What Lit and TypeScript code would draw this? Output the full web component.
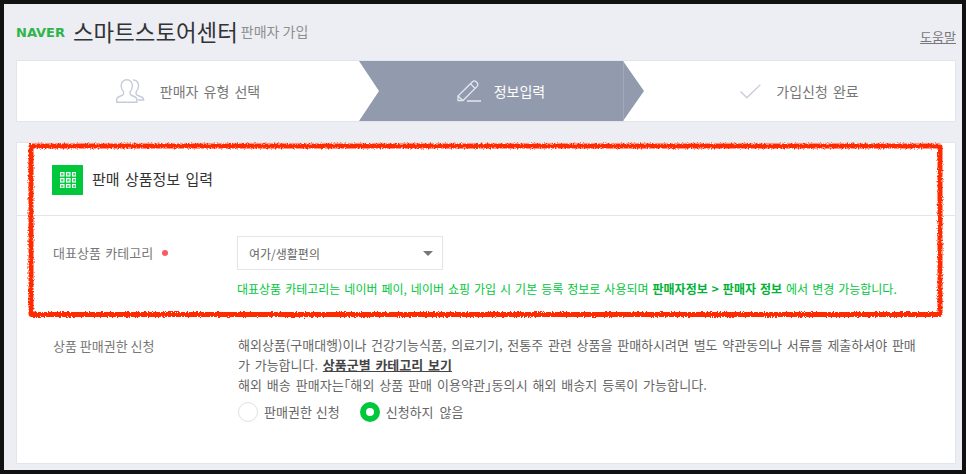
import { LitElement, html, css, svg } from "lit";
import { customElement } from "lit/decorators.js";

const peopleIcon = svg`<svg class="ic" width="30" height="24" viewBox="0 0 32 24" preserveAspectRatio="none" fill="none" stroke="#c6cbd9" stroke-width="1.5">
  <path d="M18 1c3.300-.4 6 2.200 6 5.800 0 2.600-1 4.600-2.500 5.900v2c0 .8.400 1.200 1.300 1.500l5 2c1.100.5 1.700 1.200 1.700 2.300V21h-6.500"/>
  <path d="M11.500.8c-3.600 0-6 2.500-6 6 0 2.600 1 4.600 2.500 5.900v2c0 .8-.4 1.200-1.300 1.500L2.500 18C1.400 18.500.8 19.200.8 20.300v2.900h21.400v-2.900c0-1.100-.6-1.800-1.700-2.300l-4.200-1.800c-.9-.3-1.300-.7-1.300-1.500v-2c1.500-1.300 2.500-3.300 2.500-5.900 0-3.500-2.400-6-6-6z"/>
</svg>`;
const pencilIcon = svg`<svg class="ic pen" width="24" height="22" viewBox="0 0 24 22" fill="none" stroke="#e4e7ee" stroke-width="1.3">
  <path d="M1 20.500v-4.500L15.500 1.800c1-1 2.600-1 3.700 0l.9.900c1 1 1 2.700 0 3.700L6 20.500H1z"/><path d="M13.500 3.800l4.800 4.800"/><path d="M1 16l4.800 4.500"/><path d="M10 21h14"/>
</svg>`;
const checkIcon = svg`<svg class="ic chk" width="21" height="15" viewBox="0 0 21 15" fill="none" stroke="#c6cbd9" stroke-width="1.3"><path d="M.6 7.500l6.200 6.300L20.400.6"/></svg>`;
const gridIcon = svg`<svg width="16" height="16" viewBox="0 0 16 16" fill="rgba(255,255,255,.3)" stroke="#fff" stroke-width="1.100">
  ${[0, 6, 12].flatMap((y) => [0, 6, 12].map((x) => svg`<rect x="${x + 0.5}" y="${y + 0.5}" width="3.500" height="3.500"/>`))}
</svg>`;

@customElement("app-root")
export class AppRoot extends LitElement {
  static styles = css`
    :host { display: block; width: 966px; height: 474px; background: #111; padding: 4px; box-sizing: border-box; position: relative;
      font-family: "Noto Sans CJK KR", "Noto Sans", sans-serif; color: #666; overflow: hidden; }
    .page { height: 466px; width: 958px; background: #eceef4; box-sizing: border-box; padding: 0 6px 0 12px; }
    .top { height: 56px; display: flex; align-items: flex-end; }
    .logo { font-family: "DejaVu Sans", sans-serif; font-weight: 700; font-size: 13px; line-height: 14px; color: #2fb54a; margin-right: 8px; align-self: flex-start; margin-top: 22px; }
    .title { font-size: 22.400px; line-height: 30px; color: #333; align-self: flex-start; margin-top: 12px; }
    .sub { font-size: 14px; line-height: 20px; color: #8e8e8e; margin-left: 3px; align-self: flex-start; margin-top: 17px; }
    .help { margin-left: auto; font-size: 13px; line-height: 18px; color: #777; text-decoration: underline; margin-bottom: 14px; }
    .steps { display: grid; grid-template-columns: 342px 285px 1fr; height: 60px; background: #fff; border: 1px solid #e3e5ec; }
    .step { display: flex; align-items: center; justify-content: center; gap: 14px; font-size: 14px; word-spacing: 2px; color: #777; }
    .step.on { background: #929aad; color: #fff; clip-path: polygon(0 0, 264px 0, 285px 50%, 264px 100%, 0 100%, 20px 50%); position: relative; padding-right: 1px; box-sizing: border-box; }
    .step.on::after { content: ""; position: absolute; top: 0; bottom: 0; left: 264px; width: 1px; background: #a3aabb; }
    .ic { flex: none; display: block; }
    .pen { margin-right: -1px; }
    .chk { margin-right: 1px; }
    .card { margin-top: 20px; height: 322px; box-sizing: border-box; background: #fff; border: 1px solid #e3e5ec; }
    .head { height: 73px; box-sizing: border-box; border-bottom: 1px solid #e3e5ec; display: flex; align-items: center; gap: 9px; padding-left: 35px; padding-top: 2px; }
    .badge { width: 31px; height: 30px; background: #00c73c; display: flex; align-items: center; justify-content: center; }
    .head-t { font-size: 15px; word-spacing: 2px; color: #333; margin-top: -3px; }
    .row { display: grid; grid-template-columns: 185px 1fr; padding-left: 36px; align-items: start; }
    .r1 { padding-top: 20px; height: 105px; box-sizing: border-box; }
    .label { font-size: 13px; line-height: 34px; height: 34px; word-spacing: 1.500px; color: #777; display: flex; align-items: center; gap: 9px; }
    .dot { width: 6px; height: 6px; border-radius: 50%; background: #f75c63; }
    .select { width: 206px; height: 34px; margin-left: -1px; box-sizing: border-box; border: 1.500px solid #e4e5e8; display: flex; align-items: center; justify-content: space-between; padding: 0 9px 0 11px; font-size: 12px; color: #666; }
    .arrow { width: 0; height: 0; border-left: 5.500px solid transparent; border-right: 5.500px solid transparent; border-top: 5px solid #777; }
    .note { font-size: 12px; line-height: 18px; word-spacing: 1.300px; color: #00c73c; margin-top: 10px; margin-left: -1px; white-space: nowrap; }
    .note b { font-weight: 700; color: #00b236; }
    .label2 { line-height: 20px; height: 20px; display: block; word-spacing: 0; margin-top: 1px; }
    .r2 { padding-top: 14px; }
    .desc { font-size: 13px; line-height: 20px; word-spacing: 1.800px; color: #666; width: 690px; }
    .line { display: block; height: 20px; white-space: nowrap; }
    .line3 { letter-spacing: 0.070px; }
    .desc a { color: #444; font-weight: 700; text-decoration: underline; }
    .radios { display: flex; gap: 20px; margin-top: 7px; }
    .radio { display: flex; align-items: center; gap: 6px; font-size: 13px; line-height: 20px; word-spacing: 1px; color: #666; }
    .radio.wide { word-spacing: 3px; }
    .circle { width: 20px; height: 20px; box-sizing: border-box; border-radius: 50%; border: 1px solid #e0e0e0; background: #fff; }
    .circle.on { border: 6px solid #00c73c; }
    .scribble { position: absolute; left: 0; top: 0; pointer-events: none; }
  `;

  render() {
    return html`
      <div class="page">
        <div class="top">
          <span class="logo">NAVER</span>
          <span class="title">스마트스토어센터</span>
          <span class="sub">판매자 가입</span>
          <a class="help">도움말</a>
        </div>
        <div class="steps">
          <div class="step">${peopleIcon}<span>판매자 유형 선택</span></div>
          <div class="step on">${pencilIcon}<span>정보입력</span></div>
          <div class="step">${checkIcon}<span>가입신청 완료</span></div>
        </div>
        <div class="card">
          <div class="head"><div class="badge">${gridIcon}</div><span class="head-t">판매 상품정보 입력</span></div>
          <div class="row r1">
            <div class="label">대표상품 카테고리 <i class="dot"></i></div>
            <div>
              <div class="select"><span>여가/생활편의</span><i class="arrow"></i></div>
              <div class="note">대표상품 카테고리는 네이버 페이, 네이버 쇼핑 가입 시 기본 등록 정보로 사용되며 <b>판매자정보 &gt; 판매자 정보</b> 에서 변경 가능합니다.</div>
            </div>
          </div>
          <div class="row r2">
            <div class="label label2">상품 판매권한 신청</div>
            <div>
              <div class="desc">
                <span class="line">해외상품(구매대행)이나 건강기능식품, 의료기기, 전통주 관련 상품을 판매하시려면 별도 약관동의나 서류를 제출하셔야 판매</span>
                <span class="line">가 가능합니다. <a>상품군별 카테고리 보기</a></span>
                <span class="line line3">해외 배송 판매자는｢해외 상품 판매 이용약관｣동의시 해외 배송지 등록이 가능합니다.</span>
              </div>
              <div class="radios">
                <label class="radio"><i class="circle"></i>판매권한 신청</label>
                <label class="radio wide"><i class="circle on"></i>신청하지 않음</label>
              </div>
            </div>
          </div>
        </div>
      </div>
      <svg class="scribble" width="966" height="474" fill="none">
        <defs><filter id="rough" x="-2%" y="-5%" width="104%" height="110%"><feTurbulence type="fractalNoise" baseFrequency="0.7" numOctaves="2" seed="4"/><feDisplacementMap in="SourceGraphic" scale="4"/></filter></defs>
        <rect x="31" y="146" width="909" height="168.500" rx="1" stroke="#ff2a00" stroke-width="5" filter="url(#rough)"/>
      </svg>
    `;
  }
}
